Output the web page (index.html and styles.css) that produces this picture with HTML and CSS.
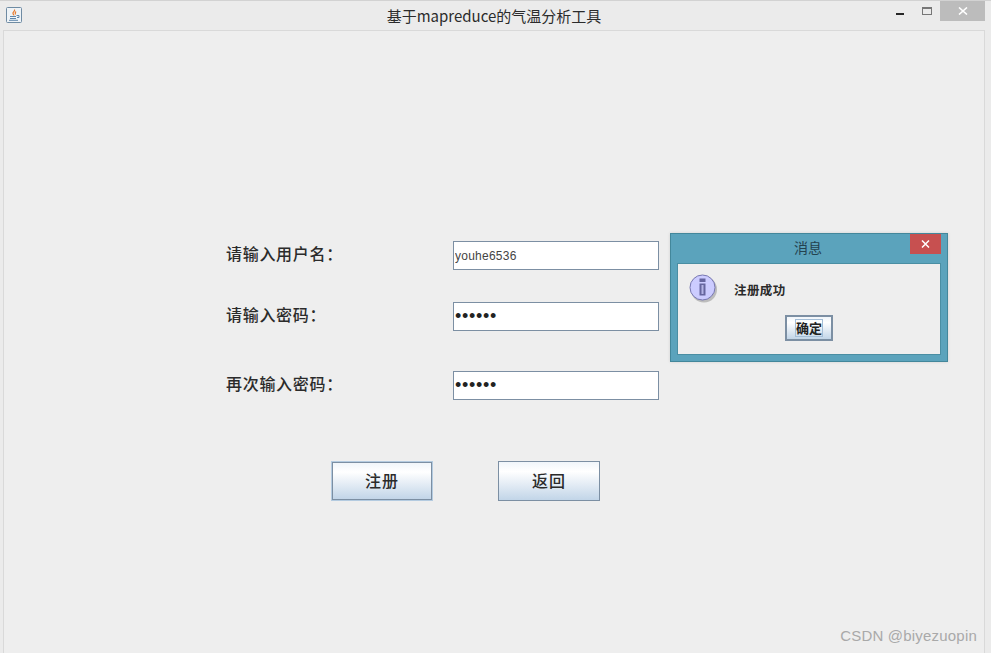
FILE: index.html
```html
<!DOCTYPE html>
<html lang="zh-CN">
<head>
    <meta charset="UTF-8">
    <meta name="viewport" content="width=device-width, initial-scale=1.0">
    <title>基于mapreduce的气温分析工具</title>
    <link rel="stylesheet" href="styles.css">
</head>
<body>
    <div class="window">
        <div class="titlebar">
            <div class="app-icon">
                <svg width="16" height="16" viewBox="0 0 16 16">
                    <rect x="0.5" y="0.5" width="15" height="15" rx="1" fill="#eef3f7" stroke="#6f8ba3"/>
                    <path d="M8.5 2.5 C9.5 4 6.5 5 7 6.5 C7.3 7.5 8 8 8 8.5 M10 4.5 C9 5.5 9 6.5 9.5 7.5" fill="none" stroke="#e8792b" stroke-width="1.2"/>
                    <path d="M4 9.5 H10 M4 11.5 H10 M3 13.3 H12" stroke="#5f86ab" stroke-width="1"/>
                    <path d="M10.5 8.5 H13 V10.5 H11" fill="none" stroke="#5f86ab" stroke-width="1"/>
                </svg>
            </div>
            <div class="title">基于mapreduce的气温分析工具</div>
            <div class="controls">
                <span class="ctl-min"></span>
                <span class="ctl-max"></span>
                <span class="ctl-close">
                    <svg width="10" height="8" viewBox="0 0 10 8"><path d="M1 0.5 L9 7.5 M9 0.5 L1 7.5" stroke="#fff" stroke-width="1.6"/></svg>
                </span>
            </div>
        </div>

        <div class="panel">
            <div class="form-row">
                <label class="form-label">请输入用户名：</label>
                <input class="form-input" type="text" value="youhe6536" readonly>
            </div>
            <div class="form-row row-second">
                <label class="form-label">请输入密码：</label>
                <input class="form-input pwd" type="password" value="123456" readonly>
            </div>
            <div class="form-row row-third">
                <label class="form-label">再次输入密码：</label>
                <input class="form-input pwd" type="password" value="123456" readonly>
            </div>
            <div class="btn-row">
                <button class="btn btn-focus">注册</button>
                <button class="btn">返回</button>
            </div>
        </div>

        <!-- 消息对话框 -->
        <div class="dialog">
            <div class="dialog-head">
                <span class="dialog-title">消息</span>
                <span class="dialog-close">
                    <svg width="9" height="8" viewBox="0 0 9 8"><path d="M1 0.5 L8 7.5 M8 0.5 L1 7.5" stroke="#fff" stroke-width="1.5"/></svg>
                </span>
            </div>
            <div class="dialog-body">
                <div class="dialog-msg">
                    <svg class="info-icon" width="30" height="30" viewBox="0 0 30 30">
                        <circle cx="15" cy="15.5" r="13" fill="#8a8a8a" opacity="0.5"/>
                        <circle cx="13.5" cy="13.5" r="12.5" fill="#ccccff" stroke="#7777b0" stroke-width="1"/>
                        <rect x="10.5" y="4.5" width="6" height="3.5" fill="#66669f"/>
                        <rect x="10.5" y="9.5" width="6" height="12" fill="#66669f"/>
                        <rect x="12.5" y="11" width="2" height="9" fill="#b4b4e6"/>
                    </svg>
                    <span class="dialog-text">注册成功</span>
                </div>
                <button class="ok-btn"><span class="ok-focus">确定</span></button>
            </div>
        </div>

        <div class="watermark">CSDN @biyezuopin</div>
    </div>
</body>
</html>
```

FILE: styles.css
```css
* {
    margin: 0;
    padding: 0;
    box-sizing: border-box;
}

html, body {
    height: 100%;
    overflow: hidden;
}

body {
    background: #ebebeb;
    font-family: "Noto Sans CJK SC", "Liberation Sans", sans-serif;
    color: #2b2b2b;
}

.window {
    position: relative;
    height: 653px;
    border-top: 1px solid #d2d2d2;
    display: flex;
    flex-direction: column;
}

.titlebar {
    height: 29px;
    flex-shrink: 0;
    display: grid;
    grid-template-columns: 1fr auto 1fr;
    padding: 0 6px;
}

.app-icon {
    display: flex;
    padding-top: 6px;
}

.title {
    font-size: 15px;
    line-height: 29px;
    margin-right: 3px;
}

.controls {
    display: flex;
    justify-content: flex-end;
    align-items: flex-start;
}

.ctl-min {
    width: 8px;
    height: 2px;
    background: #262626;
    margin: 12px 18px 0 0;
}

.ctl-max {
    width: 10px;
    height: 8px;
    border: 1px solid #777;
    border-top-width: 2px;
    margin: 6px 8px 0 0;
}

.ctl-close {
    width: 45px;
    height: 20px;
    background: #bcbcbc;
    display: flex;
    align-items: center;
    justify-content: center;
}

.panel {
    flex: 1;
    margin: 0 6px 0 3px;
    background: #eeeeee;
    border: 1px solid #d9d9d9;
    border-bottom: none;
    padding: 210px 0 0 222px;
}

.form-row {
    display: flex;
    align-items: center;
    height: 29px;
}

.row-second {
    margin-top: 32px;
}

.row-third {
    margin-top: 40px;
}

.form-label {
    width: 227px;
    padding-bottom: 5px;
    font-size: 16px;
    font-weight: 500;
    letter-spacing: 0.7px;
}

.form-input {
    width: 206px;
    height: 29px;
    border: 1px solid #7c8fa3;
    background: #fff;
    padding: 1px;
    font-family: "Liberation Sans", sans-serif;
    font-size: 12px;
    letter-spacing: 0.25px;
    color: #444;
    outline: none;
}

.pwd {
    font-size: 18px;
    letter-spacing: 0.7px;
    color: #222;
}

.btn-row {
    display: flex;
    align-items: center;
    gap: 66px;
    margin: 61px 0 0 106px;
}

.btn {
    width: 102px;
    height: 40px;
    border: 1px solid #7c8fa3;
    padding-bottom: 3px;
    background: linear-gradient(#f0f5fa 0%, #ffffff 25%, #c2d5e8 100%);
    font-family: inherit;
    font-size: 16px;
    font-weight: 500;
    letter-spacing: 1px;
    color: #2b2b2b;
}

.btn-focus {
    width: 100px;
    height: 38px;
    border-width: 1.5px;
    box-shadow: 0 0 0 1px #b4cbe0;
}

.dialog {
    position: absolute;
    left: 670px;
    top: 232px;
    width: 278px;
    height: 129px;
    background: #5ba3bc;
    border: 1px solid #43879b;
    padding: 0 6px 6px;
    display: flex;
    flex-direction: column;
    box-shadow: 0 0 3px rgba(0,0,0,0.12);
}

.dialog-head {
    position: relative;
    height: 29px;
    flex-shrink: 0;
    text-align: center;
}

.dialog-title {
    display: inline-block;
    margin: -1px 2px 0 0;
    font-size: 14px;
    line-height: 29px;
    color: #24424f;
    vertical-align: top;
}

.dialog-close {
    position: absolute;
    right: 0;
    top: 0;
    width: 31px;
    height: 20px;
    background: #c75050;
    display: flex;
    align-items: center;
    justify-content: center;
}

.dialog-body {
    flex: 1;
    background: #eeeeee;
    border: 1px solid #4a8ea3;
    display: flex;
    flex-direction: column;
    align-items: center;
}

.dialog-msg {
    align-self: flex-start;
    display: flex;
    height: 51px;
    padding: 10px 0 0 11px;
}

.dialog-text {
    font-size: 12.5px;
    font-weight: 700;
    margin: 7px 0 0 15px;
    line-height: 18px;
    letter-spacing: 0.4px;
}

.ok-btn {
    width: 48px;
    height: 26px;
    border: 2px solid #7c8fa3;
    background: linear-gradient(#f0f5fa 0%, #ffffff 25%, #c2d5e8 100%);
    font-family: inherit;
    display: flex;
    align-items: center;
    justify-content: center;
}

.ok-focus {
    width: 28px;
    height: 18px;
    border: 1px solid #a3bdd6;
    font-size: 13px;
    font-weight: 700;
    line-height: 16px;
    color: #222;
    white-space: nowrap;
}

.watermark {
    position: absolute;
    right: 14px;
    bottom: 9px;
    font-family: "Liberation Sans", sans-serif;
    font-size: 15px;
    color: #a9a9a9;
    letter-spacing: 0.2px;
}
```
